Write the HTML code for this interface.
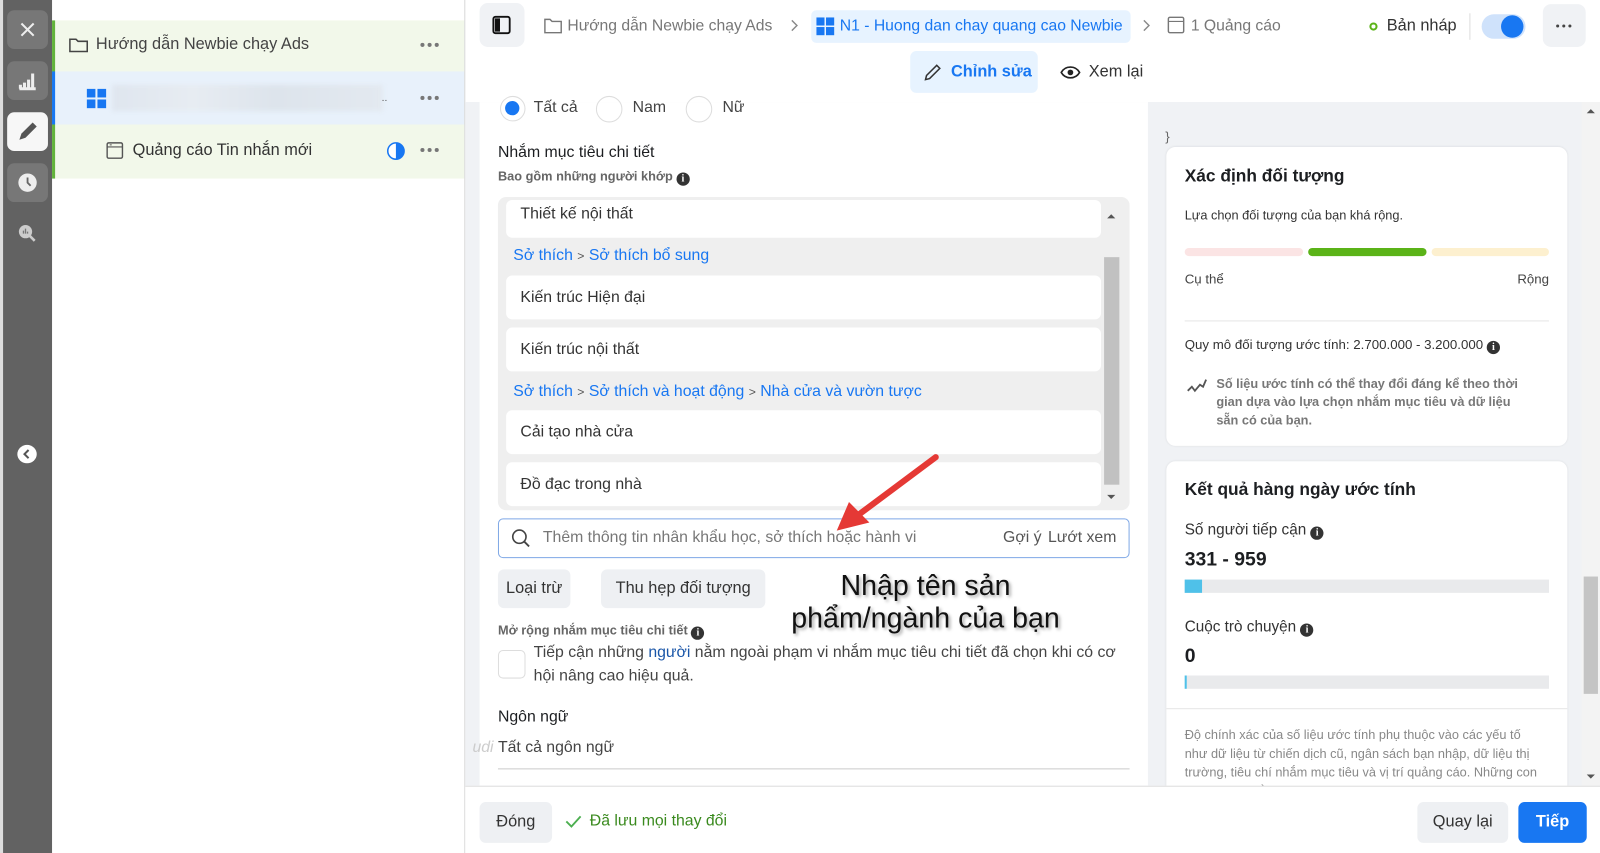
<!DOCTYPE html>
<html><head><meta charset="utf-8">
<style>
*{box-sizing:border-box;margin:0;padding:0}
html,body{width:1600px;height:853px;overflow:hidden;background:#fff;font-family:"Liberation Sans",Arial,sans-serif;color:#1c1e21}
#w{position:absolute;left:0;top:0;width:1568px;height:836px;transform:scale(1.020408);transform-origin:0 0;overflow:hidden}
.a{position:absolute}
.t{position:absolute;white-space:nowrap;line-height:1}
.rb{position:absolute;left:7px;width:40px;height:38px;border-radius:7px;background:#777}
.dots{position:absolute;width:20px;height:4px}
.dots i{position:absolute;top:0;width:4px;height:4px;border-radius:50%;background:#777}
.item{position:absolute;left:496px;width:583px;background:#fff;border-radius:6px}
.item span{position:absolute;left:14px;font-size:15.5px;color:#333;top:50%;transform:translateY(-50%);white-space:nowrap}
.lnk{color:#1877f2}
.info{display:inline-block;width:13px;height:13px;border-radius:50%;background:#333;color:#fff;font-size:10px;font-weight:bold;text-align:center;line-height:13px;vertical-align:-1px;font-family:"Liberation Serif",serif}
.btn{position:absolute;background:#eef0f3;border-radius:6px;font-size:16px;color:#333;text-align:center}
</style></head><body><div id="w">

<!-- rail -->
<div class="a" style="left:0;top:0;width:3px;height:836px;background:#ddd"></div>
<div class="a" style="left:3px;top:0;width:48px;height:836px;background:#626262"></div>
<div class="rb" style="top:10px"><svg width="40" height="38"><path d="M14 13l12 12M26 13l-12 12" stroke="#eee" stroke-width="2"/></svg></div>
<div class="rb" style="top:60px"><svg width="40" height="38"><path d="M12 27h16M13 23v4M17 21v6M21 18v9M25 12v15" stroke="#eee" stroke-width="3"/></svg></div>
<div class="rb" style="top:110px;background:#f7f7f7"><svg width="40" height="38"><path d="M12 27l2-6 11-11 4 4-11 11z" fill="#555"/></svg></div>
<div class="rb" style="top:160px"><svg width="40" height="38"><circle cx="20" cy="19" r="9" fill="#eee"/><path d="M20 14v5l3 3" stroke="#666" stroke-width="1.8" fill="none"/></svg></div>
<svg class="a" style="left:15px;top:218px" width="24" height="22"><circle cx="10" cy="9" r="6.5" fill="#ccc"/><path d="M14 13l5 5" stroke="#ccc" stroke-width="2.5"/><path d="M8 11v-3M10 11v-5M12 11v-2" stroke="#777" stroke-width="1.3"/></svg>
<div class="a" style="left:17px;top:436px;width:19px;height:18px;border-radius:50%;background:#fff"></div>
<svg class="a" style="left:17px;top:436px" width="19" height="18"><path d="M11 5l-4 4 4 4" stroke="#555" stroke-width="2" fill="none"/></svg>

<!-- sidebar -->
<div class="a" style="left:51px;top:20px;width:404px;height:155px;background:#f2f8ea"></div>
<div class="a" style="left:51px;top:20px;width:3px;height:155px;background:#62b33b"></div>
<div class="a" style="left:54px;top:70px;width:401px;height:52px;background:#e8f1fb"></div>
<div class="a" style="left:51px;top:70px;width:3px;height:52px;background:#1877f2"></div>
<svg class="a" style="left:67px;top:35px" width="20" height="18"><path d="M1.5 3.5h6l2 2h9v10h-17z" fill="none" stroke="#444" stroke-width="1.5"/></svg>
<div class="t" style="left:94px;top:36px;font-size:16px;color:#444">Hướng dẫn Newbie chạy Ads</div>
<div class="dots" style="left:412px;top:42px"><i style="left:0"></i><i style="left:7px"></i><i style="left:14px"></i></div>
<svg class="a" style="left:85px;top:87px" width="20" height="20"><rect x="0" y="0" width="8.5" height="8.5" fill="#1877f2"/><rect x="10.5" y="0" width="8.5" height="8.5" fill="#1877f2"/><rect x="0" y="10.5" width="8.5" height="8.5" fill="#1877f2"/><rect x="10.5" y="10.5" width="8.5" height="8.5" fill="#1877f2"/></svg>
<div class="a" style="left:110px;top:83px;width:265px;height:26px;background:linear-gradient(90deg,#dfe6ef,#e7ecf2 30%,#dde4ec 60%,#e3e9f0);filter:blur(2px)"></div>
<div class="t" style="left:374px;top:92px;font-size:10px;color:#555">..</div>
<div class="dots" style="left:412px;top:94px"><i style="left:0"></i><i style="left:7px"></i><i style="left:14px"></i></div>
<svg class="a" style="left:104px;top:139px" width="18" height="18"><rect x="1" y="1" width="15" height="15" rx="1.5" fill="none" stroke="#555" stroke-width="1.4"/><path d="M1 5h15" stroke="#555" stroke-width="1.2"/><path d="M3.5 3h2" stroke="#555"/></svg>
<div class="t" style="left:130px;top:140px;font-size:16px;color:#333">Quảng cáo Tin nhắn mới</div>
<svg class="a" style="left:378px;top:138px" width="20" height="20"><circle cx="10" cy="10" r="8" fill="#fff" stroke="#1877f2" stroke-width="1.5"/><path d="M10 2a8 8 0 0 1 0 16z" fill="#1877f2"/></svg>
<div class="dots" style="left:412px;top:145px"><i style="left:0"></i><i style="left:7px"></i><i style="left:14px"></i></div>
<div class="a" style="left:455px;top:0;width:1px;height:836px;background:#d8d8d8"></div>

<!-- main bg -->
<div class="a" style="left:456px;top:100px;width:1112px;height:670px;background:#f0f2f5"></div>
<div class="a" style="left:470px;top:100px;width:655px;height:670px;background:#fff"></div>

<!-- header -->
<div class="a" style="left:470px;top:3px;width:44px;height:43px;background:#f0f2f5;border-radius:8px"></div>
<svg class="a" style="left:482px;top:15px" width="20" height="20"><rect x="1.5" y="1.5" width="16" height="16" rx="2" fill="none" stroke="#111" stroke-width="1.8"/><rect x="3" y="3" width="5" height="13" fill="#111"/></svg>
<svg class="a" style="left:533px;top:17px" width="18" height="16"><path d="M1 2h5l2 2h9v11H1z" fill="none" stroke="#777" stroke-width="1.4"/></svg>
<div class="t" style="left:556px;top:18px;font-size:15.4px;color:#777">Hướng dẫn Newbie chạy Ads</div>
<svg class="a" style="left:774px;top:19px" width="10" height="12"><path d="M2 1l5 5-5 5" stroke="#888" stroke-width="1.4" fill="none"/></svg>
<div class="a" style="left:795px;top:10px;width:313px;height:32px;background:#e7f3ff;border-radius:5px"></div>
<svg class="a" style="left:800px;top:17px" width="18" height="18"><rect x="0" y="0" width="8" height="8" fill="#1877f2"/><rect x="9.5" y="0" width="8" height="8" fill="#1877f2"/><rect x="0" y="9.5" width="8" height="8" fill="#1877f2"/><rect x="9.5" y="9.5" width="8" height="8" fill="#1877f2"/></svg>
<div class="t" style="left:823px;top:18px;font-size:15.4px;color:#1877f2">N1 - Huong dan chay quang cao Newbie</div>
<svg class="a" style="left:1119px;top:19px" width="10" height="12"><path d="M2 1l5 5-5 5" stroke="#888" stroke-width="1.4" fill="none"/></svg>
<svg class="a" style="left:1144px;top:16px" width="18" height="18"><rect x="1" y="1" width="15" height="15" rx="1.5" fill="none" stroke="#777" stroke-width="1.4"/><path d="M1 5h15" stroke="#777" stroke-width="1.2"/></svg>
<div class="t" style="left:1167px;top:18px;font-size:15.4px;color:#777">1 Quảng cáo</div>
<div class="a" style="left:1342px;top:22px;width:8px;height:8px;border-radius:50%;border:2px solid #5bb318"></div>
<div class="t" style="left:1359px;top:18px;font-size:16px;color:#333">Bản nháp</div>
<div class="a" style="left:1440px;top:13px;width:1px;height:26px;background:#ddd"></div>
<div class="a" style="left:1452px;top:14px;width:43px;height:24px;border-radius:12px;background:#cfe2fb"></div>
<div class="a" style="left:1471px;top:15px;width:22px;height:22px;border-radius:50%;background:#1877f2"></div>
<div class="a" style="left:1512px;top:4px;width:42px;height:42px;background:#f0f2f5;border-radius:8px"></div>
<div class="dots" style="left:1525px;top:24px"><i style="left:0;width:3px;height:3px;background:#444"></i><i style="left:6px;width:3px;height:3px;background:#444"></i><i style="left:12px;width:3px;height:3px;background:#444"></i></div>
<div class="a" style="left:892px;top:50px;width:125px;height:41px;background:#e7f3ff;border-radius:6px"></div>
<svg class="a" style="left:904px;top:61px" width="20" height="20"><path d="M3 17l1-4 10-10 3 3-10 10z" fill="none" stroke="#333" stroke-width="1.5"/></svg>
<div class="t" style="left:932px;top:63px;font-size:16px;font-weight:bold;color:#1877f2">Chỉnh sửa</div>
<svg class="a" style="left:1039px;top:63px" width="20" height="16"><path d="M1 8c4-7 14-7 18 0-4 7-14 7-18 0z" fill="none" stroke="#222" stroke-width="1.6"/><circle cx="10" cy="8" r="2.8" fill="#222"/></svg>
<div class="t" style="left:1067px;top:63px;font-size:16px;color:#333">Xem lại</div>

<!-- content -->
<div class="a" style="left:490px;top:94px;width:25px;height:25px;border-radius:50%;border:1px solid #ddd;background:#fff"></div>
<div class="a" style="left:495px;top:99px;width:14px;height:14px;border-radius:50%;background:#1877f2"></div>
<div class="t" style="left:523px;top:98px;font-size:15.5px;color:#444">Tất cả</div>
<div class="a" style="left:584px;top:94px;width:26px;height:26px;border-radius:50%;border:1px solid #ddd"></div>
<div class="t" style="left:620px;top:98px;font-size:15.5px;color:#444">Nam</div>
<div class="a" style="left:672px;top:94px;width:26px;height:26px;border-radius:50%;border:1px solid #ddd"></div>
<div class="t" style="left:708px;top:98px;font-size:15.5px;color:#444">Nữ</div>

<div class="t" style="left:488px;top:142px;font-size:15.5px;color:#1c1e21">Nhắm mục tiêu chi tiết</div>
<div class="t" style="left:488px;top:167px;font-size:12.5px;font-weight:bold;color:#666">Bao gồm những người khớp <span class="info">i</span></div>

<div class="a" style="left:488px;top:193px;width:619px;height:307px;background:#efefef;border-radius:8px"></div>
<div class="item" style="top:196px;height:37px"><span style="top:14px">Thiết kế nội thất</span></div>
<div class="t" style="left:503px;top:243px;font-size:15.5px;color:#1877f2">Sở thích <span style="color:#555;font-size:12px">&gt;</span> Sở thích bổ sung</div>
<div class="item" style="top:270px;height:43px"><span>Kiến trúc Hiện đại</span></div>
<div class="item" style="top:321px;height:43px"><span>Kiến trúc nội thất</span></div>
<div class="t" style="left:503px;top:376px;font-size:15.5px;color:#1877f2">Sở thích <span style="color:#555;font-size:12px">&gt;</span> Sở thích và hoạt động <span style="color:#555;font-size:12px">&gt;</span> Nhà cửa và vườn tược</div>
<div class="item" style="top:402px;height:43px"><span>Cải tạo nhà cửa</span></div>
<div class="item" style="top:453px;height:43px"><span>Đồ đạc trong nhà</span></div>
<div class="a" style="left:1082px;top:252px;width:15px;height:223px;background:#c1c1c1"></div>
<svg class="a" style="left:1084px;top:208px" width="10" height="8"><path d="M1 6l4-4 4 4z" fill="#555"/></svg>
<svg class="a" style="left:1084px;top:483px" width="10" height="8"><path d="M1 2l4 4 4-4z" fill="#555"/></svg>

<div class="a" style="left:488px;top:508px;width:619px;height:39px;border:1.5px solid #7fa8e6;border-radius:5px;background:#fff"></div>
<svg class="a" style="left:500px;top:517px" width="22" height="22"><circle cx="9" cy="9" r="6.5" fill="none" stroke="#444" stroke-width="1.6"/><path d="M13.5 13.5l5 5" stroke="#444" stroke-width="1.8"/></svg>
<div class="t" style="left:532px;top:519px;font-size:15.5px;color:#777">Thêm thông tin nhân khẩu học, sở thích hoặc hành vi</div>
<div class="t" style="left:983px;top:519px;font-size:15.5px;color:#555">Gợi ý</div>
<div class="t" style="left:1027px;top:519px;font-size:15.5px;color:#555">Lướt xem</div>

<div class="btn" style="left:488px;top:558px;width:71px;height:38px;line-height:38px">Loại trừ</div>
<div class="btn" style="left:589px;top:558px;width:161px;height:38px;line-height:38px">Thu hẹp đối tượng</div>

<div class="t" style="left:907px;top:558px;transform:translateX(-50%);font-size:28px;color:#111;text-align:center;line-height:32px;text-shadow:2px 2px 3px rgba(0,0,0,.35)">Nhập tên sản<br>phẩm/ngành của bạn</div>

<svg class="a" style="left:800px;top:440px" width="130" height="95"><path d="M117 8L38 67" stroke="#e53935" stroke-width="6" stroke-linecap="round"/><path d="M20 80L32 52 52 72z" fill="#e53935"/></svg>

<div class="t" style="left:488px;top:612px;font-size:12.5px;font-weight:bold;color:#666">Mở rộng nhắm mục tiêu chi tiết <span class="info">i</span></div>
<div class="a" style="left:488px;top:637px;width:27px;height:28px;border:1px solid #ddd;border-radius:5px"></div>
<div class="t" style="left:523px;top:632px;font-size:15.5px;color:#444">Tiếp cận những <span style="color:#1a56a8">người</span> nằm ngoài phạm vi nhắm mục tiêu chi tiết đã chọn khi có cơ</div>
<div class="t" style="left:523px;top:655px;font-size:15.5px;color:#444">hội nâng cao hiệu quả.</div>
<div class="t" style="left:488px;top:695px;font-size:15.5px;color:#1c1e21">Ngôn ngữ</div>
<div class="t" style="left:463px;top:725px;font-size:15.5px;color:#ccc;font-style:italic">udi</div>
<div class="t" style="left:488px;top:725px;font-size:15.5px;color:#444">Tất cả ngôn ngữ</div>
<div class="a" style="left:488px;top:753px;width:619px;height:1px;background:#ccc"></div>

<!-- right column -->
<div class="a" style="left:1550px;top:100px;width:18px;height:670px;background:#f3f3f3"></div>
<div class="a" style="left:1552px;top:565px;width:14px;height:115px;background:#c4c4c4"></div>
<svg class="a" style="left:1554px;top:105px" width="10" height="8"><path d="M1 6l4-4 4 4z" fill="#555"/></svg>
<svg class="a" style="left:1554px;top:757px" width="10" height="8"><path d="M1 2l4 4 4-4z" fill="#555"/></svg>
<div class="t" style="left:1142px;top:127px;font-size:13px;color:#666">}</div>
<div class="a" style="left:1143px;top:144px;width:393px;height:293px;background:#fff;border-radius:9px;box-shadow:0 0 2px rgba(0,0,0,.08)"></div>
<div class="t" style="left:1161px;top:164px;font-size:17px;font-weight:bold;color:#1c1e21">Xác định đối tượng</div>
<div class="t" style="left:1161px;top:205px;font-size:12.5px;color:#333">Lựa chọn đối tượng của bạn khá rộng.</div>
<div class="a" style="left:1161px;top:243px;width:116px;height:8px;border-radius:4px;background:#fbe4e4"></div>
<div class="a" style="left:1282px;top:243px;width:116px;height:8px;border-radius:4px;background:#5bb318"></div>
<div class="a" style="left:1403px;top:243px;width:115px;height:8px;border-radius:4px;background:#fdf0cf"></div>
<div class="t" style="left:1161px;top:267px;font-size:13px;color:#444">Cụ thể</div>
<div class="t" style="left:1487px;top:267px;font-size:13px;color:#444">Rộng</div>
<div class="a" style="left:1161px;top:314px;width:357px;height:1px;background:#e6e6e6"></div>
<div class="t" style="left:1161px;top:331px;font-size:13px;color:#333">Quy mô đối tượng ước tính: 2.700.000 - 3.200.000 <span class="info">i</span></div>
<svg class="a" style="left:1162px;top:368px" width="22" height="20"><path d="M2 15l4-4 3 4 5-6 3 2 3-7" fill="none" stroke="#555" stroke-width="1.8"/></svg>
<div class="t" style="left:1192px;top:367px;font-size:12.5px;font-weight:bold;color:#777;line-height:18px;white-space:normal;width:312px">Số liệu ước tính có thể thay đổi đáng kể theo thời gian dựa vào lựa chọn nhắm mục tiêu và dữ liệu sẵn có của bạn.</div>

<div class="a" style="left:1143px;top:452px;width:393px;height:330px;background:#fff;border-radius:9px;box-shadow:0 0 2px rgba(0,0,0,.08)"></div>
<div class="t" style="left:1161px;top:471px;font-size:17px;font-weight:bold;color:#1c1e21">Kết quả hàng ngày ước tính</div>
<div class="t" style="left:1161px;top:512px;font-size:15px;color:#333">Số người tiếp cận <span class="info">i</span></div>
<div class="t" style="left:1161px;top:539px;font-size:19px;font-weight:bold;color:#1c1e21">331 - 959</div>
<div class="a" style="left:1161px;top:568px;width:357px;height:13px;background:#e9eaec"></div>
<div class="a" style="left:1161px;top:568px;width:17px;height:13px;background:#4fc1e9"></div>
<div class="t" style="left:1161px;top:607px;font-size:15px;color:#333">Cuộc trò chuyện <span class="info">i</span></div>
<div class="t" style="left:1161px;top:634px;font-size:19px;font-weight:bold;color:#1c1e21">0</div>
<div class="a" style="left:1161px;top:662px;width:357px;height:13px;background:#e9eaec"></div>
<div class="a" style="left:1161px;top:662px;width:2px;height:13px;background:#4fc1e9"></div>
<div class="a" style="left:1143px;top:694px;width:393px;height:1px;background:#e6e6e6"></div>
<div class="t" style="left:1161px;top:711px;font-size:12.5px;color:#888;line-height:18.5px;white-space:normal;width:352px">Độ chính xác của số liệu ước tính phụ thuộc vào các yếu tố như dữ liệu từ chiến dịch cũ, ngân sách bạn nhập, dữ liệu thị trường, tiêu chí nhắm mục tiêu và vị trí quảng cáo. Những con số này chỉ nhằm giúp bạn hình dung được hiệu quả mà</div>

<!-- footer -->
<div class="a" style="left:456px;top:770px;width:1112px;height:66px;background:#fff;border-top:1px solid #ddd"></div>
<div class="btn" style="left:470px;top:786px;width:71px;height:40px;line-height:40px">Đóng</div>
<svg class="a" style="left:553px;top:797px" width="18" height="16"><path d="M2 8l5 5 9-10" fill="none" stroke="#4caf50" stroke-width="1.8"/></svg>
<div class="t" style="left:578px;top:797px;font-size:15.5px;color:#3a8a1e">Đã lưu mọi thay đổi</div>
<div class="btn" style="left:1389px;top:786px;width:89px;height:40px;line-height:40px">Quay lại</div>
<div class="btn" style="left:1488px;top:786px;width:67px;height:40px;line-height:40px;background:#1877f2;color:#fff;font-weight:bold">Tiếp</div>

</div></body></html>
